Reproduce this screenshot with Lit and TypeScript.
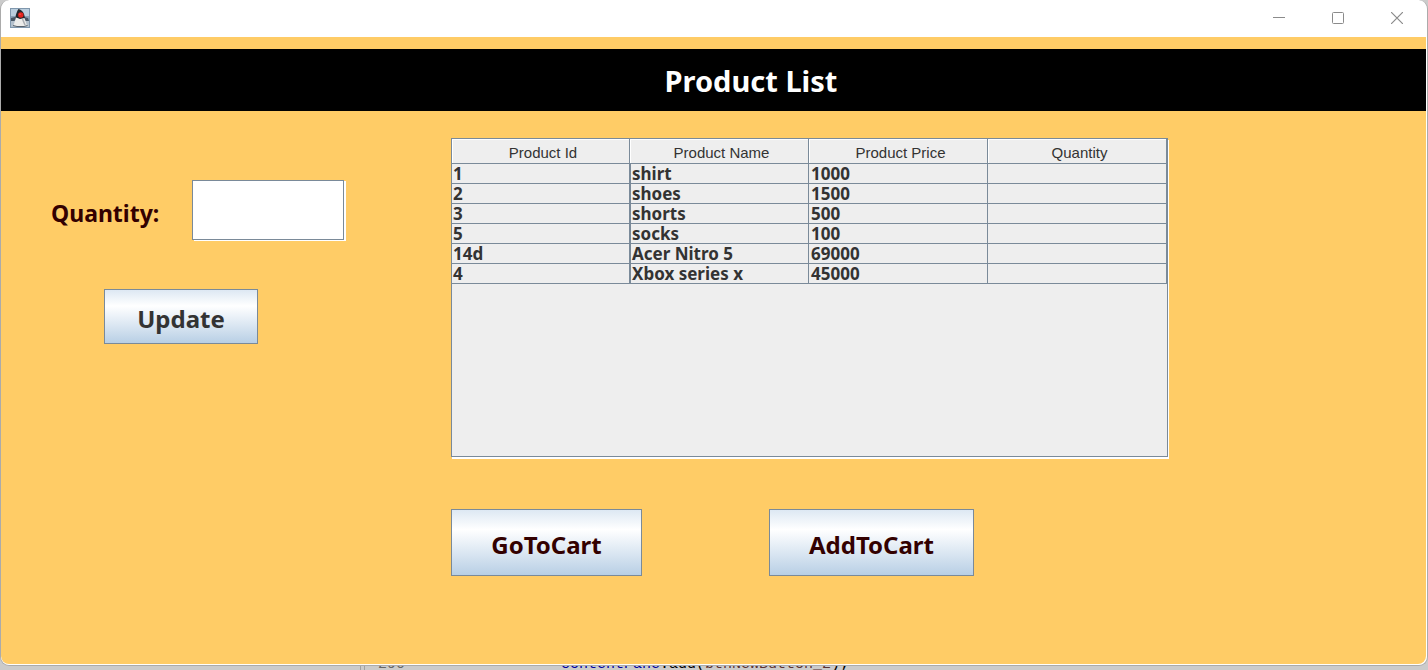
import { LitElement, html, css, svg } from "lit";
import { customElement, property } from "lit/decorators.js";

interface Product {
  id: string;
  name: string;
  price: string;
  quantity: string;
}

const PRODUCTS: Product[] = [
  { id: "1", name: "shirt", price: "1000", quantity: "" },
  { id: "2", name: "shoes", price: "1500", quantity: "" },
  { id: "3", name: "shorts", price: "500", quantity: "" },
  { id: "5", name: "socks", price: "100", quantity: "" },
  { id: "14d", name: "Acer Nitro 5", price: "69000", quantity: "" },
  { id: "4", name: "Xbox series x", price: "45000", quantity: "" },
];

// Duke mascot on a blue tile
const dukeIcon = svg`
  <rect x="0" y="0" width="20" height="20" fill="#7f97ad"/>
  <rect x="1" y="1" width="18" height="18" fill="#b9cddd"/>
  <rect x="1" y="8" width="18" height="5" fill="#8ba1b5"/>
  <rect x="1" y="13" width="18" height="6" fill="#b3c0cc"/>
  <path d="M1 10l4-1 2 2-3 2-3 0zM14 9l4 1 1 3-3 0-2-1z" fill="#485664"/>
  <path d="M8.500 1c2.500 .5 5 2.500 5.800 6l.7 3.500-4 1-5.500-1.500C5.500 7 7 3 8.500 1z" fill="#23262c"/>
  <path d="M6 9.500l4 1.500 4.500-1 2.500 7.500-3.500 1h-7l-3-1z" fill="#ececea"/>
  <path d="M3 17.500l4 1h7l3.500-1" fill="none" stroke="#59626c" stroke-width="1"/>
  <path d="M12.500 11l2.500 6" stroke="#a9adb2" stroke-width="1.500"/>
  <circle cx="10.800" cy="7" r="2.700" fill="#e3221d"/>
  <circle cx="10" cy="6.200" r=".8" fill="#ff5a4a"/>
`;

@customElement("product-table")
export class ProductTable extends LitElement {
  @property({ attribute: false }) products: Product[] = [];

  static styles = css`
    :host {
      display: block;
      box-sizing: border-box;
      min-height: 319px;
      background: #eeeeee;
      border: 1px solid #7a8a99;
      box-shadow: 1px 2px 0 #ffffff;
    }
    .grid {
      width: 100%;
      table-layout: fixed;
      border-collapse: separate;
      border-spacing: 0;
      color: #333333;
    }
    .first {
      width: 178px;
    }
    .head {
      box-sizing: border-box;
      height: 25px;
      padding: 3px 0 0 5px;
      border-right: 1px solid #7a8a99;
      border-bottom: 1px solid #7a8a99;
      box-shadow: inset 1px 1px 0 #ffffff;
      font: 400 15px/20px "Liberation Sans", Arial, sans-serif;
      text-align: center;
    }
    .cell {
      box-sizing: border-box;
      height: 20px;
      padding: 0 1px;
      border-right: 1px solid #7a8a99;
      border-bottom: 1px solid #7a8a99;
      font: 700 17px/19px "Noto Sans", "Open Sans", sans-serif;
      text-align: left;
      white-space: nowrap;
    }
    .name {
      border-left: 1px solid #7a8a99;
    }
    .price {
      padding-left: 2px;
    }
  `;

  render() {
    return html`
      <table class="grid">
        <colgroup>
          <col class="first" />
          <col span="3" />
        </colgroup>
        <thead>
          <tr>
            <th class="head" scope="col">Product Id</th>
            <th class="head" scope="col">Product Name</th>
            <th class="head" scope="col">Product Price</th>
            <th class="head" scope="col">Quantity</th>
          </tr>
        </thead>
        <tbody>
          ${this.products.map(
            (p) => html`<tr>
              <td class="cell">${p.id}</td>
              <td class="cell name">${p.name}</td>
              <td class="cell price">${p.price}</td>
              <td class="cell">${p.quantity}</td>
            </tr>`
          )}
        </tbody>
      </table>
    `;
  }
}

@customElement("app-root")
export class AppRoot extends LitElement {
  static styles = css`
    :host {
      display: flex;
      flex-direction: column;
      min-height: 100vh;
      background: #cbcbcb;
      font-family: "Noto Sans", "Open Sans", sans-serif;
    }
    .window {
      flex: 1;
      display: flex;
      flex-direction: column;
      box-sizing: border-box;
      overflow: hidden;
      border: 1px solid #ababab;
      border-top: 0;
      border-radius: 9px;
      background: #ffffff;
    }
    .titlebar {
      display: flex;
      align-items: center;
      justify-content: space-between;
      box-sizing: border-box;
      height: 37px;
      padding: 0 1px 1px 9px;
    }
    .icon {
      display: block;
    }
    .controls {
      display: flex;
    }
    .control {
      display: grid;
      place-items: center;
      width: 59px;
      height: 36px;
      padding: 0;
      border: 0;
      background: none;
      color: #8b8b8b;
    }
    .content {
      flex: 1;
      padding-top: 12px;
      margin: 0 1px 1px 0;
      background: #ffcc66;
      border-radius: 0 0 8px 8px;
    }
    .banner {
      margin: 0;
      padding: 2px 0 0 75px;
      background: #000000;
      color: #ffffff;
      font-size: 29px;
      line-height: 60px;
      font-weight: 700;
      text-align: center;
    }
    .body {
      display: grid;
      grid-template-columns: 450fr 717fr 258fr;
      padding-top: 27px;
    }
    .form {
      padding: 42px 0 0 50px;
    }
    .field {
      display: flex;
      align-items: center;
      gap: 31px;
    }
    .label {
      width: 110px;
      color: #330000;
      font-size: 23px;
      line-height: 32px;
      font-weight: 700;
      padding-top: 6px;
    }
    .input {
      box-sizing: border-box;
      width: 152px;
      height: 60px;
      padding: 0 4px;
      border: 1px solid #7a8a99;
      border-radius: 0;
      outline: 0;
      background: #ffffff;
      box-shadow: 2px 1px 0 #ffffff;
      font: 700 24px/32px "Noto Sans", "Open Sans", sans-serif;
    }
    .button {
      box-sizing: border-box;
      padding: 4px 0 0;
      border: 1px solid #7a8a99;
      border-radius: 0;
      background: linear-gradient(#dde8f3, #ffffff 30%, #dde8f3 64%, #b8cfe5);
      color: #330000;
      font: 700 24px/32px "Noto Sans", "Open Sans", sans-serif;
    }
    .update {
      width: 154px;
      height: 55px;
      margin: 49px 0 0 53px;
      color: #333333;
    }
    .actions {
      display: flex;
      gap: 127px;
      padding-top: 52px;
    }
    .go {
      width: 191px;
      height: 67px;
    }
    .add {
      width: 205px;
      height: 67px;
    }
    .editor {
      display: grid;
      grid-template-columns: 360px 5px 196px 1fr;
      align-content: end;
      align-items: end;
      height: 4px;
      overflow: hidden;
      font: 400 15px/10px "Liberation Mono", monospace;
      white-space: pre;
    }
    .divider {
      height: 4px;
      border: 1px solid #a2a2a2;
      border-width: 0 1px;
      box-sizing: border-box;
    }
    .line {
      padding-left: 13px;
      color: #666666;
    }
    .member {
      color: #0000a0;
    }
    .variable {
      color: #5a3232;
    }
  `;

  render() {
    return html`
      <div class="window">
        <header class="titlebar">
          <svg class="icon" width="20" height="20" viewBox="0 0 20 20" aria-hidden="true">${dukeIcon}</svg>
          <div class="controls">
            <button class="control" aria-label="Minimize">
              <svg width="12" height="12" viewBox="0 0 12 12"><path d="M0 5.500h12" stroke="currentColor" /></svg>
            </button>
            <button class="control" aria-label="Maximize">
              <svg width="12" height="12" viewBox="0 0 12 12">
                <rect x=".5" y=".5" width="11" height="11" rx="1" fill="none" stroke="currentColor" />
              </svg>
            </button>
            <button class="control" aria-label="Close">
              <svg width="12" height="12" viewBox="0 0 12 12">
                <path d="M0 0l12 12M12 0L0 12" stroke="currentColor" stroke-width="1.200" />
              </svg>
            </button>
          </div>
        </header>
        <main class="content">
          <h1 class="banner">Product List</h1>
          <div class="body">
            <form class="form" @submit=${(e: Event) => e.preventDefault()}>
              <div class="field">
                <label class="label" for="quantity">Quantity:</label>
                <input class="input" id="quantity" type="text" />
              </div>
              <button class="button update" type="submit">Update</button>
            </form>
            <section>
              <product-table .products=${PRODUCTS}></product-table>
              <div class="actions">
                <button class="button go" type="button">GoToCart</button>
                <button class="button add" type="button">AddToCart</button>
              </div>
            </section>
          </div>
        </main>
      </div>
      <div class="editor" aria-hidden="true">
        <span></span><span class="divider"></span><span class="line">290</span
        ><span><span class="member">contentPane</span>.add(<span class="variable">btnNewButton_2</span>);</span>
      </div>
    `;
  }
}
